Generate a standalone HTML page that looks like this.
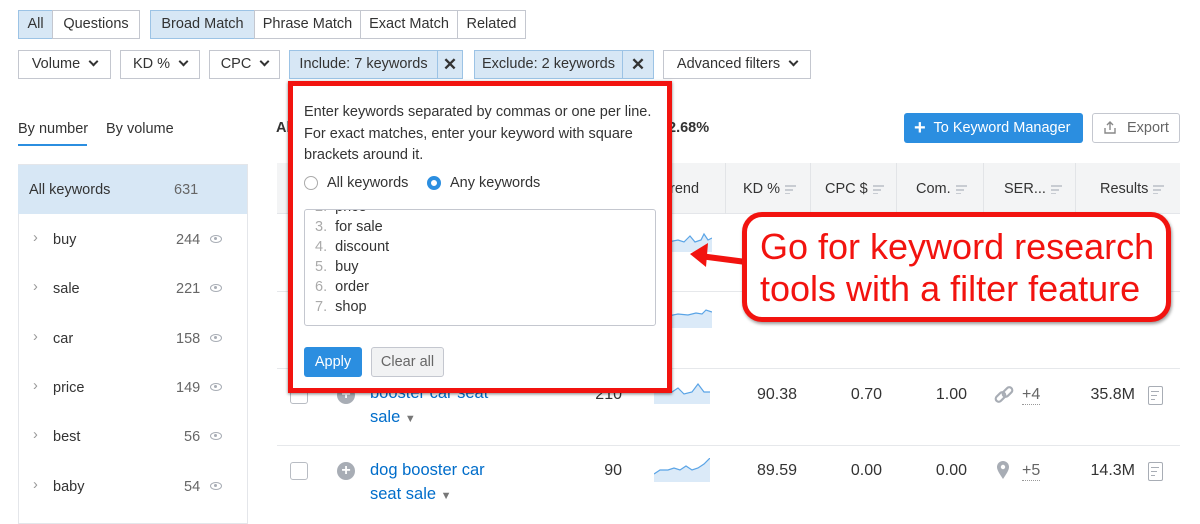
<!DOCTYPE html>
<html><head><meta charset="utf-8"><style>
*{box-sizing:border-box;margin:0;padding:0}
body{width:1200px;height:512px;overflow:hidden;background:#fff;font-family:"Liberation Sans",sans-serif;color:#333;font-size:14.5px;position:relative}
.a{position:absolute;white-space:nowrap}
.btn{position:absolute;border:1px solid #c4c7cf;background:#fff;height:29px;line-height:27px;text-align:center;font-size:14.5px;color:#333;white-space:nowrap}
.sel{background:#d7e7f5;border-color:#9cc3e5}
.chev{display:inline-block;width:7px;height:7px;border-right:2px solid #333;border-bottom:2px solid #333;transform:rotate(45deg);margin-left:10px;position:relative;top:-3px}
.row{position:absolute;left:18px;width:229px;height:49px;font-size:14.5px}
.blue{color:#006dca}
.eye{display:inline-block;width:12px;height:8px;border:1.5px solid #a8adb5;border-radius:50%}
.eye:after{content:"";position:absolute;left:3px;top:1px;width:3px;height:3px;background:#a8adb5;border-radius:50%}
.sort{display:inline-block;width:11px;height:9px;margin-left:5px;vertical-align:middle;background:linear-gradient(#c8ccd2,#c8ccd2) 0 0/11px 2px no-repeat,linear-gradient(#c8ccd2,#c8ccd2) 0 4px/8px 2px no-repeat,linear-gradient(#c8ccd2,#c8ccd2) 0 8px/5px 2px no-repeat}
.cb{position:absolute;width:18px;height:18px;border:1.5px solid #b8bcc3;border-radius:3px;background:#fff}
.plus{position:absolute;width:18px;height:18px;border-radius:50%;background:#a8adb5;color:#fff;font-size:16px;line-height:18px;text-align:center;font-weight:bold}
.num{position:absolute;font-size:16px;color:#333;text-align:right}
.doc{position:absolute;width:15px;height:19px;border:1.5px solid #a8adb5;border-radius:2px}
.doc:after{content:"";position:absolute;left:2px;top:4px;width:8px;height:9px;background:linear-gradient(#a8adb5,#a8adb5) 0 0/8px 1px no-repeat,linear-gradient(#a8adb5,#a8adb5) 0 4px/6px 1px no-repeat,linear-gradient(#a8adb5,#a8adb5) 0 8px/4px 1px no-repeat}
</style></head><body>

<div class="btn sel" style="left:18px;top:10px;width:35px">All</div>
<div class="btn" style="left:52px;top:10px;width:88px">Questions</div>
<div class="btn sel" style="left:150px;top:10px;width:105px">Broad Match</div>
<div class="btn" style="left:254px;top:10px;width:107px">Phrase Match</div>
<div class="btn" style="left:360px;top:10px;width:98px">Exact Match</div>
<div class="btn" style="left:457px;top:10px;width:69px">Related</div>

<div class="btn" style="left:18px;top:50px;width:93px">Volume<span class="chev"></span></div>
<div class="btn" style="left:120px;top:50px;width:80px">KD %<span class="chev"></span></div>
<div class="btn" style="left:209px;top:50px;width:71px">CPC<span class="chev"></span></div>
<div class="btn sel" style="left:289px;top:50px;width:149px">Include: 7 keywords</div>
<div class="btn sel" style="left:437px;top:50px;width:26px;font-size:17px;font-weight:bold">✕</div>
<div class="btn sel" style="left:474px;top:50px;width:149px">Exclude: 2 keywords</div>
<div class="btn sel" style="left:622px;top:50px;width:32px;font-size:17px;font-weight:bold">✕</div>
<div class="btn" style="left:663px;top:50px;width:148px">Advanced filters<span class="chev"></span></div>

<div class="a" style="left:18px;top:121px">By number</div>
<div style="position:absolute;left:18px;top:144px;width:69px;height:2px;background:#2b8ee0"></div>
<div class="a" style="left:106px;top:121px">By volume</div>

<div style="position:absolute;left:18px;top:164px;width:230px;height:360px;border:1px solid #e4e6ea"></div>
<div class="row" style="top:165px;background:#d7e7f5"><span class="a" style="left:11px;top:17px">All keywords</span><span class="a" style="left:156px;top:17px;color:#666">631</span></div>
<div class="row" style="top:215px"><span class="a" style="left:15px;top:15px;color:#999">›</span><span class="a" style="left:35px;top:17px">buy</span><span class="a" style="left:158px;top:17px;color:#666">244</span><span class="eye a" style="left:192px;top:20px"></span></div>
<div class="row" style="top:264px"><span class="a" style="left:15px;top:15px;color:#999">›</span><span class="a" style="left:35px;top:17px">sale</span><span class="a" style="left:158px;top:17px;color:#666">221</span><span class="eye a" style="left:192px;top:20px"></span></div>
<div class="row" style="top:314px"><span class="a" style="left:15px;top:15px;color:#999">›</span><span class="a" style="left:35px;top:17px">car</span><span class="a" style="left:158px;top:17px;color:#666">158</span><span class="eye a" style="left:192px;top:20px"></span></div>
<div class="row" style="top:363px"><span class="a" style="left:15px;top:15px;color:#999">›</span><span class="a" style="left:35px;top:17px">price</span><span class="a" style="left:158px;top:17px;color:#666">149</span><span class="eye a" style="left:192px;top:20px"></span></div>
<div class="row" style="top:412px"><span class="a" style="left:15px;top:15px;color:#999">›</span><span class="a" style="left:35px;top:17px">best</span><span class="a" style="left:166px;top:17px;color:#666">56</span><span class="eye a" style="left:192px;top:20px"></span></div>
<div class="row" style="top:462px"><span class="a" style="left:15px;top:15px;color:#999">›</span><span class="a" style="left:35px;top:17px">baby</span><span class="a" style="left:166px;top:17px;color:#666">54</span><span class="eye a" style="left:192px;top:20px"></span></div>

<div class="a" style="left:276px;top:120px;font-weight:bold">Al</div>
<div class="a" style="left:668px;top:120px;font-weight:bold">2.68%</div>
<div style="position:absolute;left:904px;top:113px;width:179px;height:30px;background:#2b8ee0;border-radius:3px;color:#fff;line-height:30px;font-size:14.5px;padding-left:10px;white-space:nowrap"><b style="font-size:20px;vertical-align:-2px">+</b>&nbsp; To Keyword Manager</div>
<div style="position:absolute;left:1092px;top:113px;width:88px;height:30px;border:1px solid #c4c7cf;border-radius:3px;color:#666;line-height:28px;font-size:14.5px;padding-left:34px">Export</div>
<svg class="a" style="left:1103px;top:120px" width="14" height="15" viewBox="0 0 14 15"><path d="M7 10V2M4 5l3-3 3 3M2 8v5h10V8" fill="none" stroke="#888" stroke-width="1.4"/></svg>

<div style="position:absolute;left:277px;top:163px;width:903px;height:51px;background:#f3f4f5;border-bottom:1px solid #e4e6ea"></div>
<div style="position:absolute;left:725px;top:163px;width:1px;height:51px;background:#e2e4e7"></div>
<div style="position:absolute;left:810px;top:163px;width:1px;height:51px;background:#e2e4e7"></div>
<div style="position:absolute;left:896px;top:163px;width:1px;height:51px;background:#e2e4e7"></div>
<div style="position:absolute;left:983px;top:163px;width:1px;height:51px;background:#e2e4e7"></div>
<div style="position:absolute;left:1075px;top:163px;width:1px;height:51px;background:#e2e4e7"></div>
<div class="a" style="left:670px;top:181px">rend</div>
<div class="a" style="left:743px;top:181px">KD %<span class="sort"></span></div>
<div class="a" style="left:825px;top:181px">CPC $<span class="sort"></span></div>
<div class="a" style="left:916px;top:181px">Com.<span class="sort"></span></div>
<div class="a" style="left:1004px;top:181px">SER...<span class="sort"></span></div>
<div class="a" style="left:1100px;top:181px">Results<span class="sort"></span></div>

<div style="position:absolute;left:277px;top:291px;width:903px;height:1px;background:#e6e8eb"></div>
<div style="position:absolute;left:277px;top:368px;width:903px;height:1px;background:#e6e8eb"></div>
<div style="position:absolute;left:277px;top:445px;width:903px;height:1px;background:#e6e8eb"></div>

<svg class="a" style="left:668px;top:230px" width="44" height="22"><path d="M0 12L10 10 16 12 22 6 27 12 33 10 36 4 40 10 44 8V22H0Z" fill="#dbeaf8"/><path d="M0 12L10 10 16 12 22 6 27 12 33 10 36 4 40 10 44 8" fill="none" stroke="#5aa4e6" stroke-width="1.2"/></svg>
<svg class="a" style="left:668px;top:306px" width="44" height="22"><path d="M0 10L10 8 20 9 28 7 34 8 38 4 44 6V22H0Z" fill="#dbeaf8"/><path d="M0 10L10 8 20 9 28 7 34 8 38 4 44 6" fill="none" stroke="#5aa4e6" stroke-width="1.2"/></svg>
<svg class="a" style="left:654px;top:380px" width="56" height="24"><path d="M0 12L10 10 18 12 24 8 30 14 38 12 44 4 50 12 56 12V24H0Z" fill="#dbeaf8"/><path d="M0 12L10 10 18 12 24 8 30 14 38 12 44 4 50 12 56 12" fill="none" stroke="#5aa4e6" stroke-width="1.2"/></svg>
<svg class="a" style="left:654px;top:458px" width="56" height="24"><path d="M0 16L6 12 14 12 20 10 26 12 32 8 38 12 44 10 50 6 56 0V24H0Z" fill="#dbeaf8"/><path d="M0 16L6 12 14 12 20 10 26 12 32 8 38 12 44 10 50 6 56 0" fill="none" stroke="#5aa4e6" stroke-width="1.2"/></svg>

<div class="cb" style="left:290px;top:386px"></div>
<div class="plus" style="left:337px;top:386px">+</div>
<div class="a blue" style="left:370px;top:384px;font-size:16.5px">booster car seat</div>
<div class="a blue" style="left:370px;top:408px;font-size:16.5px">sale <span style="color:#777;font-size:11px">▼</span></div>
<div class="num" style="left:580px;top:386px;width:42px">210</div>
<div class="num" style="left:740px;top:386px;width:57px">90.38</div>
<div class="num" style="left:830px;top:386px;width:52px">0.70</div>
<div class="num" style="left:915px;top:386px;width:52px">1.00</div>
<svg class="a" style="left:993px;top:385px" width="22" height="20" viewBox="0 0 22 20"><g fill="none" stroke="#a8adb5" stroke-width="2.2"><rect x="2" y="9" width="11" height="6" rx="3" transform="rotate(-45 7.5 12)"/><rect x="9" y="4" width="11" height="6" rx="3" transform="rotate(-45 14.5 7)"/></g></svg>
<div class="a" style="left:1022px;top:386px;font-size:16px;color:#666;border-bottom:1px dotted #999">+4</div>
<div class="num" style="left:1080px;top:386px;width:55px">35.8M</div>
<div class="doc" style="left:1148px;top:386px"></div>

<div class="cb" style="left:290px;top:462px"></div>
<div class="plus" style="left:337px;top:462px">+</div>
<div class="a blue" style="left:370px;top:461px;font-size:16.5px">dog booster car</div>
<div class="a blue" style="left:370px;top:485px;font-size:16.5px">seat sale <span style="color:#777;font-size:11px">▼</span></div>
<div class="num" style="left:580px;top:462px;width:42px">90</div>
<div class="num" style="left:740px;top:462px;width:57px">89.59</div>
<div class="num" style="left:830px;top:462px;width:52px">0.00</div>
<div class="num" style="left:915px;top:462px;width:52px">0.00</div>
<svg class="a" style="left:996px;top:460px" width="14" height="20" viewBox="0 0 14 20"><path d="M7 19C3 13 1 10 1 7a6 6 0 0112 0c0 3-2 6-6 12z" fill="#a8adb5"/><circle cx="7" cy="7" r="2.2" fill="#fff"/></svg>
<div class="a" style="left:1022px;top:462px;font-size:16px;color:#666;border-bottom:1px dotted #999">+5</div>
<div class="num" style="left:1080px;top:462px;width:55px">14.3M</div>
<div class="doc" style="left:1148px;top:462px"></div>

<div style="position:absolute;left:288px;top:81px;width:384px;height:312px;border:5px solid #f2130f;background:#fff;box-shadow:0 1px 3px rgba(0,0,0,.5)">
  <div class="a" style="left:11px;top:16px;font-size:14.5px;line-height:21.5px">Enter keywords separated by commas or one per line.<br>For exact matches, enter your keyword with square<br>brackets around it.</div>
  <div class="a" style="left:11px;top:90px;width:14px;height:14px;border:1.5px solid #aaa;border-radius:50%"></div>
  <div class="a" style="left:34px;top:89px">All keywords</div>
  <div class="a" style="left:134px;top:90px;width:14px;height:14px;border:4px solid #2b8ee0;border-radius:50%"></div>
  <div class="a" style="left:157px;top:89px">Any keywords</div>
  <div style="position:absolute;left:11px;top:123px;width:352px;height:117px;border:1px solid #c4c7cf;border-radius:3px;overflow:hidden;line-height:20px">
    <div style="position:absolute;left:10px;top:-13px"><span style="color:#aaa">2.</span>&nbsp; price</div>
    <div style="position:absolute;left:10px;top:7px"><span style="color:#aaa">3.</span>&nbsp; for sale</div>
    <div style="position:absolute;left:10px;top:27px"><span style="color:#aaa">4.</span>&nbsp; discount</div>
    <div style="position:absolute;left:10px;top:47px"><span style="color:#aaa">5.</span>&nbsp; buy</div>
    <div style="position:absolute;left:10px;top:67px"><span style="color:#aaa">6.</span>&nbsp; order</div>
    <div style="position:absolute;left:10px;top:87px"><span style="color:#aaa">7.</span>&nbsp; shop</div>
  </div>
  <div style="position:absolute;left:11px;top:261px;width:58px;height:30px;background:#2b8ee0;border-radius:3px;color:#fff;text-align:center;line-height:30px">Apply</div>
  <div style="position:absolute;left:78px;top:261px;width:73px;height:30px;background:#f1f2f3;border:1px solid #c4c7cf;border-radius:3px;color:#666;text-align:center;line-height:28px">Clear all</div>
</div>

<svg class="a" style="left:680px;top:235px" width="70" height="50"><path d="M66 27L20 21" stroke="#f2130f" stroke-width="6"/><path d="M10 19L28 8 26 32Z" fill="#f2130f"/></svg>
<div style="position:absolute;left:742px;top:212px;width:429px;height:110px;border:5px solid #f2130f;border-radius:20px;background:#fff;box-shadow:1px 2px 3px rgba(0,0,0,.4)"></div>
<div class="a" style="left:760px;top:226px;font-family:'Liberation Sans',sans-serif;font-size:36px;color:#f2130f;line-height:42px">Go for keyword research<br>tools with a filter feature</div>
</body></html>
